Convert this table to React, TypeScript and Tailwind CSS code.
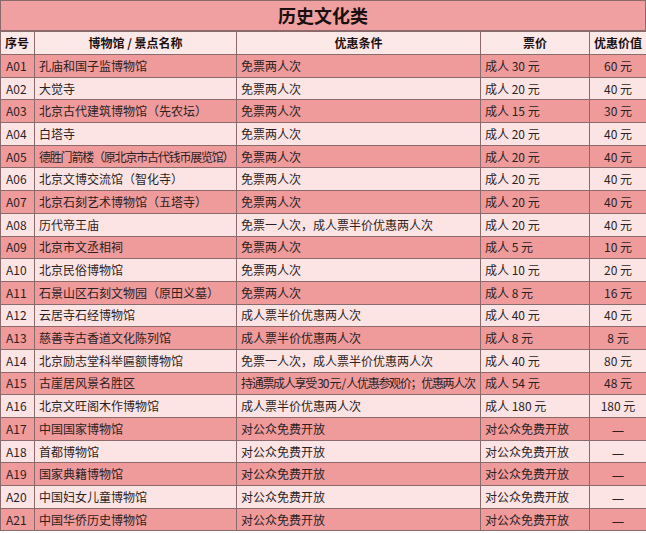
const rows: [string, string, string, string, string][] = [
  ["A01", "孔庙和国子监博物馆", "免票两人次", "成人 30 元", "60 元"],
  ["A02", "大觉寺", "免票两人次", "成人 20 元", "40 元"],
  ["A03", "北京古代建筑博物馆（先农坛）", "免票两人次", "成人 15 元", "30 元"],
  ["A04", "白塔寺", "免票两人次", "成人 20 元", "40 元"],
  ["A05", "德胜门箭楼（原北京市古代钱币展览馆）", "免票两人次", "成人 20 元", "40 元"],
  ["A06", "北京文博交流馆（智化寺）", "免票两人次", "成人 20 元", "40 元"],
  ["A07", "北京石刻艺术博物馆（五塔寺）", "免票两人次", "成人 20 元", "40 元"],
  ["A08", "历代帝王庙", "免票一人次，成人票半价优惠两人次", "成人 20 元", "40 元"],
  ["A09", "北京市文丞相祠", "免票两人次", "成人 5 元", "10 元"],
  ["A10", "北京民俗博物馆", "免票两人次", "成人 10 元", "20 元"],
  ["A11", "石景山区石刻文物园（原田义墓）", "免票两人次", "成人 8 元", "16 元"],
  ["A12", "云居寺石经博物馆", "成人票半价优惠两人次", "成人 40 元", "40 元"],
  ["A13", "慈善寺古香道文化陈列馆", "成人票半价优惠两人次", "成人 8 元", "8 元"],
  ["A14", "北京励志堂科举匾额博物馆", "免票一人次，成人票半价优惠两人次", "成人 40 元", "80 元"],
  ["A15", "古崖居风景名胜区", "持通票成人享受 30 元 / 人优惠参观价；优惠两人次", "成人 54 元", "48 元"],
  ["A16", "北京文旺阁木作博物馆", "成人票半价优惠两人次", "成人 180 元", "180 元"],
  ["A17", "中国国家博物馆", "对公众免费开放", "对公众免费开放", "—"],
  ["A18", "首都博物馆", "对公众免费开放", "对公众免费开放", "—"],
  ["A19", "国家典籍博物馆", "对公众免费开放", "对公众免费开放", "—"],
  ["A20", "中国妇女儿童博物馆", "对公众免费开放", "对公众免费开放", "—"],
  ["A21", "中国华侨历史博物馆", "对公众免费开放", "对公众免费开放", "—"],
];

export default function App() {
  return (
    <div
      className="w-[646px] h-[533px] bg-white text-[#2b1f1f] overflow-hidden"
      style={{ fontFamily: '"Noto Sans CJK SC", "Noto Sans", sans-serif' }}
    >
      <div className="h-[31px] flex items-center justify-center bg-[#f0a0a0] border border-[#8a6a6a] text-[18px] font-bold text-[#1a1010]">
        历史文化类
      </div>
      <table className="w-[646px] table-fixed border-collapse text-[12px] leading-none">
        <colgroup>
          <col className="w-[34px]" />
          <col className="w-[202px]" />
          <col className="w-[244px]" />
          <col className="w-[109px]" />
          <col className="w-[57px]" />
        </colgroup>
        <thead>
          <tr className="h-[23px] bg-[#fde8e8] font-bold text-[#1a1010]">
            <th className="border border-[#8a6a6a] pl-[4px] text-left font-bold">序号</th>
            <th className="border border-[#8a6a6a] text-center font-bold">博物馆 / 景点名称</th>
            <th className="border border-[#8a6a6a] text-center font-bold">优惠条件</th>
            <th className="border border-[#8a6a6a] text-center font-bold">票价</th>
            <th className="border border-[#8a6a6a] text-center font-bold">优惠价值</th>
          </tr>
        </thead>
        <tbody>
          {rows.map((r, i) => (
            <tr key={r[0]} className={i % 2 === 0 ? "h-[22.7px] bg-[#ef9a9b]" : "h-[22.7px] bg-[#fde4e4]"}>
              <td className="border border-[#8a6a6a] pl-[5px] whitespace-nowrap">{r[0]}</td>
              <td
                className={
                  r[0] === "A05"
                    ? "border border-[#8a6a6a] pl-[4px] whitespace-nowrap overflow-hidden tracking-[-1.2px]"
                    : "border border-[#8a6a6a] pl-[4px] whitespace-nowrap overflow-hidden"
                }
              >
                {r[1]}
              </td>
              <td
                className={
                  r[0] === "A15"
                    ? "border border-[#8a6a6a] pl-[4px] whitespace-nowrap overflow-hidden tracking-[-1.3px]"
                    : "border border-[#8a6a6a] pl-[4px] whitespace-nowrap overflow-hidden"
                }
              >
                {r[2]}
              </td>
              <td className="border border-[#8a6a6a] pl-[4px] whitespace-nowrap">{r[3]}</td>
              <td className="border border-[#8a6a6a] text-center whitespace-nowrap">
                {r[4] === "—" ? <span className="text-[14px]">—</span> : r[4]}
              </td>
            </tr>
          ))}
        </tbody>
      </table>
    </div>
  );
}
